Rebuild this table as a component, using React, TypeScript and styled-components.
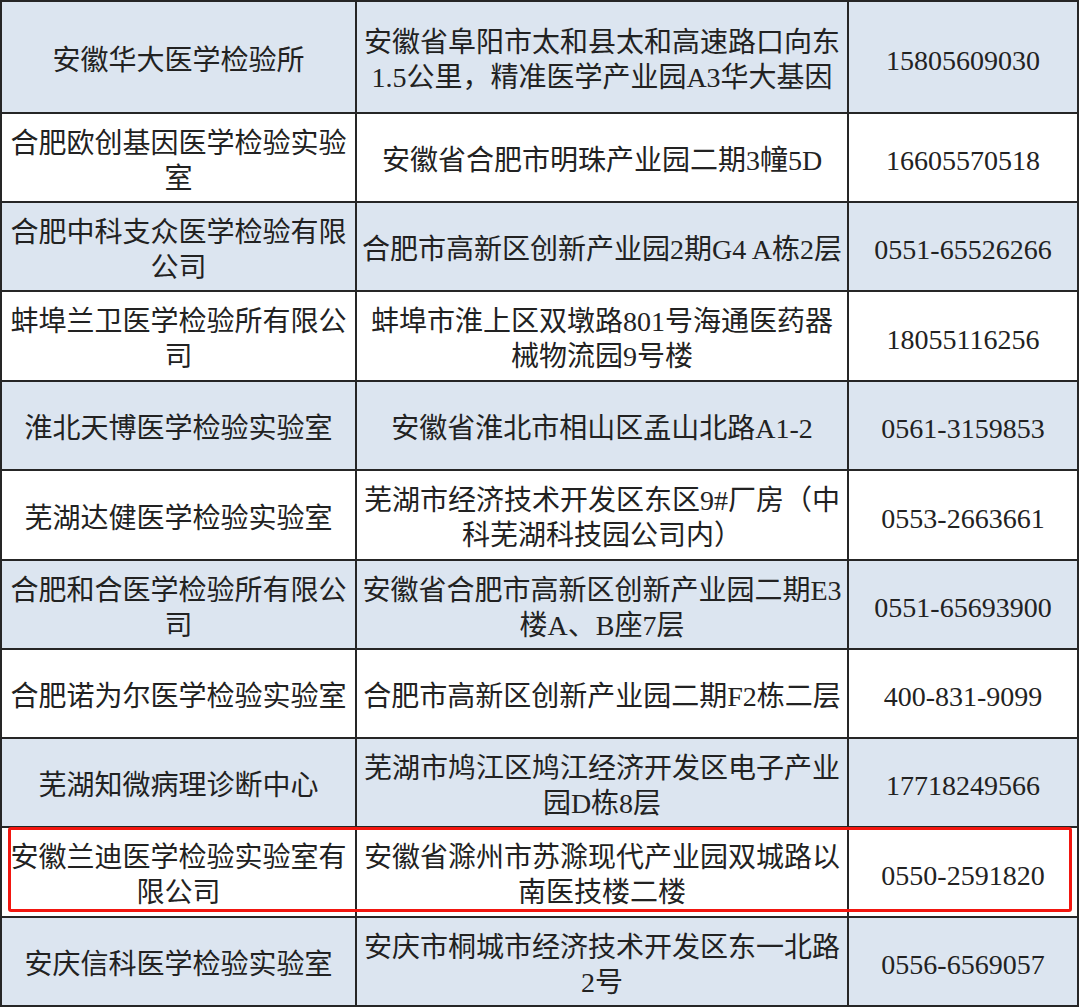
import styled, { createGlobalStyle } from 'styled-components';

const GlobalStyle = createGlobalStyle`
  html, body {
    margin: 0;
    padding: 0;
    background: #ffffff;
  }
  body {
    font-family: "Liberation Serif", "Noto Sans CJK SC", serif;
    color: #222222;
  }
`;

interface LabRow {
  name: string[];
  address: string[];
  phone: string;
  height: number;
  highlight?: boolean;
}

const rows: LabRow[] = [
  {
    name: ['安徽华大医学检验所'],
    address: ['安徽省阜阳市太和县太和高速路口向东', '1.5公里，精准医学产业园A3华大基因'],
    phone: '15805609030',
    height: 110,
  },
  { name: ['合肥欧创基因医学检验实验', '室'], address: ['安徽省合肥市明珠产业园二期3幢5D'], phone: '16605570518', height: 87 },
  { name: ['合肥中科支众医学检验有限', '公司'], address: ['合肥市高新区创新产业园2期G4 A栋2层'], phone: '0551-65526266', height: 87 },
  {
    name: ['蚌埠兰卫医学检验所有限公', '司'],
    address: ['蚌埠市淮上区双墩路801号海通医药器', '械物流园9号楼'],
    phone: '18055116256',
    height: 88,
  },
  { name: ['淮北天博医学检验实验室'], address: ['安徽省淮北市相山区孟山北路A1-2'], phone: '0561-3159853', height: 87 },
  {
    name: ['芜湖达健医学检验实验室'],
    address: ['芜湖市经济技术开发区东区9#厂房（中', '科芜湖科技园公司内）'],
    phone: '0553-2663661',
    height: 88,
  },
  {
    name: ['合肥和合医学检验所有限公', '司'],
    address: ['安徽省合肥市高新区创新产业园二期E3', '楼A、B座7层'],
    phone: '0551-65693900',
    height: 87,
  },
  { name: ['合肥诺为尔医学检验实验室'], address: ['合肥市高新区创新产业园二期F2栋二层'], phone: '400-831-9099', height: 87 },
  {
    name: ['芜湖知微病理诊断中心'],
    address: ['芜湖市鸠江区鸠江经济开发区电子产业', '园D栋8层'],
    phone: '17718249566',
    height: 87,
  },
  {
    name: ['安徽兰迪医学检验实验室有', '限公司'],
    address: ['安徽省滁州市苏滁现代产业园双城路以', '南医技楼二楼'],
    phone: '0550-2591820',
    height: 88,
    highlight: true,
  },
  {
    name: ['安庆信科医学检验实验室'],
    address: ['安庆市桐城市经济技术开发区东一北路', '2号'],
    phone: '0556-6569057',
    height: 87,
  },
];

const Table = styled.div`
  width: 1079px;
  display: flex;
  flex-direction: column;
  gap: 2px;
  padding: 2px;
  box-sizing: border-box;
  background: #262626;
`;

const Row = styled.div<{ $h: number; $highlight?: boolean }>`
  position: relative;
  display: grid;
  grid-template-columns: 353px 490px 228px;
  gap: 2px;
  height: ${(p) => p.$h}px;

  ${(p) =>
    p.$highlight &&
    `
    &::after {
      content: "";
      position: absolute;
      top: -1px;
      left: 6px;
      right: 5px;
      bottom: 4px;
      border: 3px solid #f2160f;
      border-radius: 3px;
      pointer-events: none;
    }
  `}
`;

const Cell = styled.div<{ $shade: boolean }>`
  display: flex;
  flex-direction: column;
  align-items: center;
  justify-content: center;
  box-sizing: border-box;
  padding-top: 6px;
  background: ${(p) => (p.$shade ? '#dce5f0' : '#ffffff')};
  font-size: 28px;
  overflow: visible;
`;

const Line = styled.span`
  display: block;
  white-space: nowrap;
  line-height: 35px;
  text-align: center;
`;

export default function App() {
  return (
    <>
      <GlobalStyle />
      <Table>
        {rows.map((r, i) => {
          const shade = i % 2 === 0;
          return (
            <Row key={i} $h={r.height} $highlight={r.highlight}>
              <Cell $shade={shade}>
                {r.name.map((l) => (
                  <Line key={l}>{l}</Line>
                ))}
              </Cell>
              <Cell $shade={shade}>
                {r.address.map((l) => (
                  <Line key={l}>{l}</Line>
                ))}
              </Cell>
              <Cell $shade={shade}>
                <Line>{r.phone}</Line>
              </Cell>
            </Row>
          );
        })}
      </Table>
    </>
  );
}
